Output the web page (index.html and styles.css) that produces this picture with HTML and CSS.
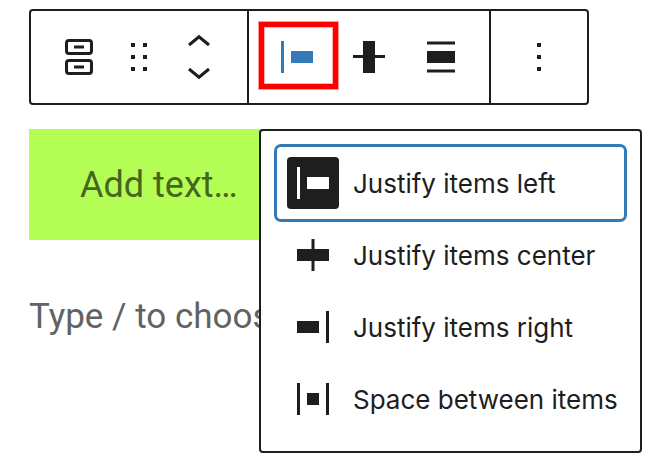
FILE: index.html
```html
<!DOCTYPE html>
<html lang="en">
<head>
<meta charset="utf-8">
<title>Block editor</title>
<link rel="stylesheet" href="styles.css">
</head>
<body>
<main class="editor">
  <div class="toolbar" role="toolbar" aria-label="Block tools">
    <div class="group group-block">
      <button class="tool" type="button" aria-label="Buttons">
        <svg viewBox="0 0 24 24"><g fill="none" stroke="currentColor" stroke-width="1.5"><rect x="5.75" y="3.75" width="12.5" height="6.5" rx="1.25"/><rect x="5.75" y="13.75" width="12.5" height="6.5" rx="1.25"/><path d="M9.5 7h5M9.5 17h5"/></g></svg>
      </button>
      <button class="tool" type="button" aria-label="Drag">
        <svg viewBox="0 0 24 24"><path d="M8 5h2v2H8zM14 5h2v2h-2zM8 11h2v2H8zM14 11h2v2h-2zM8 17h2v2H8zM14 17h2v2h-2z"/></svg>
      </button>
      <div class="movers">
        <button class="mover" type="button" aria-label="Move up">
          <svg viewBox="0 0 24 12"><path d="M7 6l5-4.1L17 6" fill="none" stroke="currentColor" stroke-width="1.5"/></svg>
        </button>
        <button class="mover" type="button" aria-label="Move down">
          <svg viewBox="0 0 24 12"><path d="M7 6l5 4.1L17 6" fill="none" stroke="currentColor" stroke-width="1.5"/></svg>
        </button>
      </div>
    </div>
    <div class="group">
      <button class="tool tool-active" type="button" aria-label="Change items justification" aria-expanded="true">
        <svg viewBox="0 0 24 24"><path d="M4 4h1.5v16H4zM9 9h11v6H9z"/></svg>
      </button>
      <button class="tool" type="button" aria-label="Change vertical alignment">
        <svg viewBox="0 0 24 24"><path d="M4 11h5V4h6v7h5v1.5h-5V20H9v-7.5H4z"/></svg>
      </button>
      <button class="tool" type="button" aria-label="Align">
        <svg viewBox="0 0 24 24"><path d="M5 4.25h14v1.5H5zM5 9h14v6H5zM5 18.25h14v1.5H5z"/></svg>
      </button>
    </div>
    <div class="group">
      <button class="tool" type="button" aria-label="Options">
        <svg viewBox="0 0 24 24"><path d="M11 5h2v2h-2zM11 11h2v2h-2zM11 17h2v2h-2z"/></svg>
      </button>
    </div>
  </div>

  <div class="canvas">
    <div class="content">
      <button class="block-button" type="button">Add text…</button>
      <p class="prompt">Type / to choose</p>
    </div>

    <div class="menu" role="menu" aria-label="Items justification">
      <button class="item item-selected" type="button" role="menuitemradio" aria-checked="true">
        <svg class="item-icon" viewBox="0 0 24 24"><path d="M4 4h1.5v16H4zM9 9h11v6H9z"/></svg>
        <span class="item-label">Justify items left</span>
      </button>
      <button class="item" type="button" role="menuitemradio" aria-checked="false">
        <svg class="item-icon" viewBox="0 0 24 24"><path d="M4 9h7.25V4h1.5v5H20v6h-7.25v5h-1.5v-5H4z"/></svg>
        <span class="item-label">Justify items center</span>
      </button>
      <button class="item" type="button" role="menuitemradio" aria-checked="false">
        <svg class="item-icon" viewBox="0 0 24 24"><path d="M4 9h11v6H4zM18.5 4H20v16h-1.5z"/></svg>
        <span class="item-label">Justify items right</span>
      </button>
      <button class="item" type="button" role="menuitemradio" aria-checked="false">
        <svg class="item-icon" viewBox="0 0 24 24"><path d="M4 4h1.5v16H4zM9 9h6v6H9zM18.5 4H20v16h-1.5z"/></svg>
        <span class="item-label">Space between items</span>
      </button>
    </div>
  </div>
</main>
</body>
</html>
```
FILE: styles.css
```css
* {
  box-sizing: border-box;
}

body {
  margin: 0;
  background: #fff;
  color: #1e1e1e;
  font-family: Inter, "Liberation Sans", sans-serif;
}

button {
  margin: 0;
  padding: 0;
  border: 0;
  background: none;
  color: inherit;
  font: inherit;
  text-align: left;
}

svg {
  display: block;
  width: 100%;
  fill: currentColor;
}

.editor {
  display: flex;
  flex-direction: column;
  align-items: flex-start;
  gap: 24px;
  padding: 9px 16px 11px 29px;
}

.toolbar {
  display: flex;
  border: 2px solid #1e1e1e;
  border-radius: 4px;
}

.group {
  display: flex;
  align-items: center;
  gap: 24px;
  padding: 22px 24px;
}

.group + .group {
  border-left: 2px solid #1e1e1e;
}

.group-block {
  gap: 12px;
}

.tool {
  position: relative;
  width: 48px;
  height: 48px;
}

.tool-active {
  color: #337ab7;
}

/* Highlight frame around the active tool */
.tool-active::after {
  content: "";
  position: absolute;
  inset: -11px -17px -8px -14px;
  border: 5px solid #f00;
  box-shadow: 0 0 0 1px rgba(255, 0, 0, 0.4), inset 0 0 0 1px rgba(255, 0, 0, 0.3);
}

.movers {
  display: flex;
  flex-direction: column;
  width: 48px;
}

.mover {
  height: 24px;
}

/* The menu shares the content's grid row and opens over it */
.canvas {
  display: grid;
  grid-template-columns: 230px minmax(0, 1fr);
  align-self: stretch;
  align-items: start;
}

.content {
  grid-area: 1 / 1 / 2 / 3;
  font-family: Roboto, "Liberation Sans", sans-serif;
}

.block-button {
  display: block;
  padding: 33px 51px 31px;
  background: #b4fd55;
  color: #48651f;
  font-size: 36px;
  line-height: 47px;
}

.prompt {
  margin: 48px 0 0;
  color: #626262;
  font-size: 35px;
  line-height: 58px;
  white-space: nowrap;
}

.menu {
  grid-area: 1 / 2 / 2 / 3;
  z-index: 1;
  padding: 16px;
  border: 2px solid #1e1e1e;
  border-radius: 4px;
  background: #fff;
}

.item {
  display: flex;
  align-items: center;
  gap: 16px;
  width: 100%;
  height: 72px;
  padding: 0 12px;
  border-radius: 4px;
  font-size: 26px;
  line-height: 36px;
  white-space: nowrap;
}

.item-label {
  padding-top: 2px;
}

.item-icon {
  flex: none;
  width: 48px;
  height: 48px;
}

.item-selected {
  box-shadow: 0 0 0 3px #337ab7;
}

.item-selected .item-icon {
  border-radius: 2px;
  background: #1e1e1e;
  box-shadow: 0 0 0 2px #1e1e1e;
  color: #fff;
}
```
